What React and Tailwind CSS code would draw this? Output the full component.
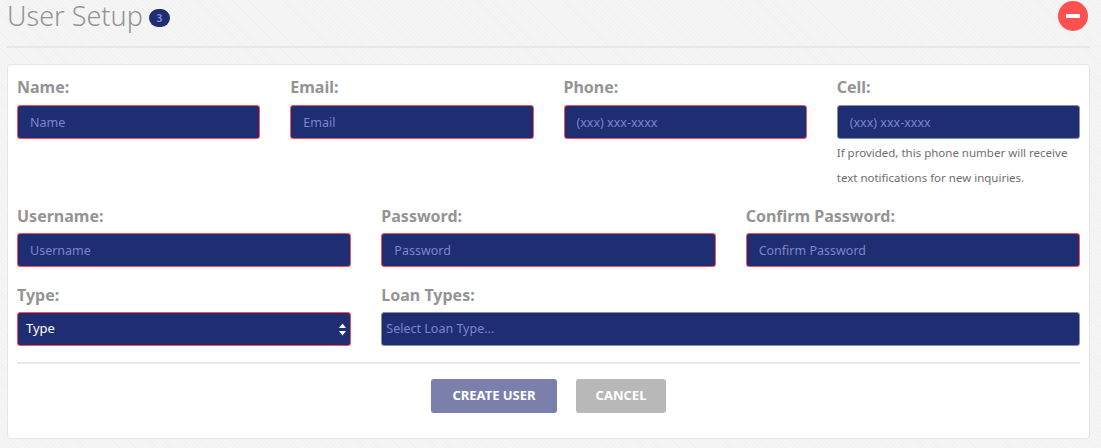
const INVALID = 'border-[#ff4f55]'
const VALID = 'border-[#8a8fa8]'
const LABEL = 'block h-[40px] pt-[10px] text-[16px] leading-[24px] font-bold text-[#949494]'
const LABEL_LOW = 'block h-[40px] pt-[11px] text-[16px] leading-[24px] font-bold text-[#949494]'

function Field({ label, placeholder, invalid = true, labelClass = LABEL, children }) {
  return (
    <div>
      <label className={labelClass}>{label}</label>
      <input
        placeholder={placeholder}
        className={`block h-[34px] w-full rounded-[3px] border bg-[#1f2d73] px-3 text-[12.5px] text-white outline-none placeholder:text-[#7c87cc] ${invalid ? INVALID : VALID}`}
      />
      {children}
    </div>
  )
}

export default function App() {
  return (
    <div className="h-[448px] overflow-hidden bg-[repeating-linear-gradient(45deg,#f1f1f1_0px,#f1f1f1_1px,#f5f5f5_1px,#f5f5f5_3px)] pr-[11px] pl-[7px] font-['Noto_Sans',sans-serif]">
      {/* Header */}
      <div className="flex h-[48px] items-start justify-between border-b-2 border-[#e8e8e8]">
        <div className="flex items-start gap-[6px]">
          <h1 className="text-[27px] leading-[31px] font-light text-[#949494]">User Setup</h1>
          <span className="mt-[9px] flex h-[18px] w-[21px] items-center justify-center rounded-full bg-[#1f2d73] text-[10px] font-semibold text-[#8d97d8]">3</span>
        </div>
        <button className="mt-[1px] mr-[2px] flex h-[30px] w-[30px] items-center justify-center rounded-full bg-[#ff5050]">
          <span className="h-[4px] w-[14px] rounded-[1px] bg-white"></span>
        </button>
      </div>

      {/* Form card */}
      <div className="mt-[16px] h-[375px] rounded-[4px] border border-[#e6e6e6] bg-white px-[9px]">
        <div className="grid grid-cols-4 gap-x-[30px]">
          <Field label="Name:" placeholder="Name" />
          <Field label="Email:" placeholder="Email" />
          <Field label="Phone:" placeholder="(xxx) xxx-xxxx" />
          <Field label="Cell:" placeholder="(xxx) xxx-xxxx" invalid={false}>
            <p className="mt-[1px] text-[11.5px] leading-[25px] text-[#6e6e6e]">
              If provided, this phone number will receive text notifications for new inquiries.
            </p>
          </Field>
        </div>

        <div className="mt-[3px] grid grid-cols-3 gap-x-[30px]">
          <Field label="Username:" placeholder="Username" labelClass={LABEL_LOW} />
          <Field label="Password:" placeholder="Password" labelClass={LABEL_LOW} />
          <Field label="Confirm Password:" placeholder="Confirm Password" labelClass={LABEL_LOW} />
        </div>

        <div className="mt-[5px] grid grid-cols-3 gap-x-[30px]">
          <div>
            <label className={LABEL_LOW}>Type:</label>
            <div className={`flex h-[34px] items-center justify-between rounded-[3px] border bg-[#1f2d73] pr-[4px] pl-[8px] text-[13px] text-white ${INVALID}`}>
              <span>Type</span>
              <svg width="7" height="13" viewBox="0 0 7 13" fill="white">
                <path d="M3.5 0.5 L7 5 H0 Z" />
                <path d="M0 8 H7 L3.5 12.5 Z" />
              </svg>
            </div>
          </div>
          <div className="col-span-2">
            <label className={LABEL_LOW}>Loan Types:</label>
            <div className={`flex h-[34px] items-center rounded-[3px] border bg-[#1f2d73] pl-[4px] text-[12.5px] text-[#7c87cc] ${VALID}`}>
              Select Loan Type...
            </div>
          </div>
        </div>

        <div className="mt-[16px] border-t-2 border-[#e8e8e8]"></div>

        {/* Actions */}
        <div className="mt-[15px] flex justify-center gap-[19px]">
          <button className="h-[34px] w-[126px] rounded-[3px] bg-[#7a80ab] text-[13px] font-bold text-white">CREATE USER</button>
          <button className="h-[34px] w-[90px] rounded-[3px] bg-[#b8b8b8] text-[13px] font-bold text-white">CANCEL</button>
        </div>
      </div>
    </div>
  )
}
